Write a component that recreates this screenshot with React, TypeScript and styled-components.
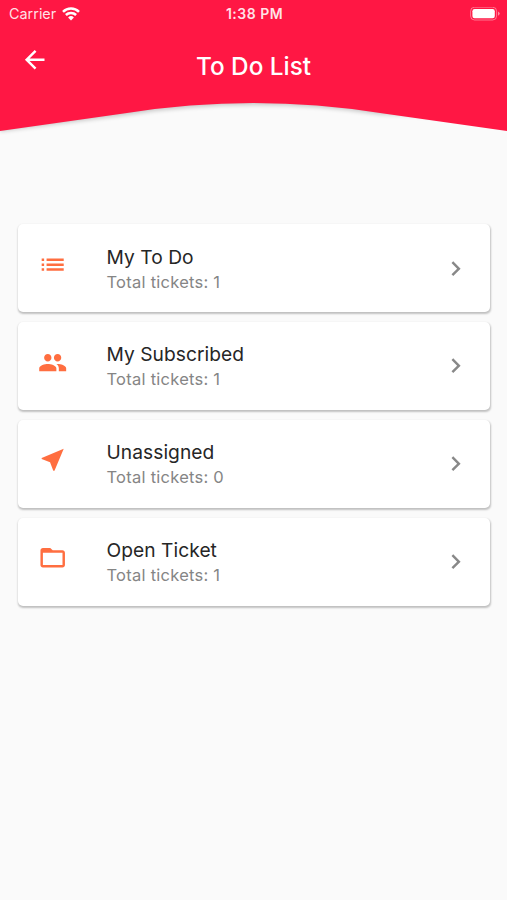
import React from "react";
import styled, { createGlobalStyle } from "styled-components";

const GlobalStyle = createGlobalStyle`
  * { box-sizing: border-box; }
  body {
    margin: 0;
    background: #fafafa;
    font-family: Inter, "Liberation Sans", sans-serif;
  }
`;

const Screen = styled.div`
  min-height: 900px;
  background: #fafafa;
`;

const Header = styled.header`
  position: relative;
  height: 131px;
  color: #fff;
`;

const Wave = styled.svg`
  position: absolute;
  inset: 0;
  width: 100%;
  height: 140px;
  overflow: hidden;
`;

const StatusBar = styled.div`
  position: relative;
  display: grid;
  grid-template-columns: 1fr auto 1fr;
  align-items: center;
  height: 27px;
  padding: 0 7px 0 9px;
`;

const Carrier = styled.div`
  display: flex;
  align-items: center;
  gap: 6px;
  font-size: 14.4px;
  line-height: 18px;
  color: rgba(255, 255, 255, 0.88);
`;

const Clock = styled.div`
  font-size: 14px;
  font-weight: 600;
  line-height: 18px;
  letter-spacing: 0.5px;
  color: rgba(255, 255, 255, 0.88);
`;

const Battery = styled.svg`
  justify-self: end;
  display: block;
`;

const NavBar = styled.div`
  position: relative;
  display: grid;
  grid-template-columns: 50px 1fr 50px;
  height: 66px;
  padding: 0 10px;
`;

const BackButton = styled.button`
  display: flex;
  align-items: center;
  justify-content: center;
  width: 50px;
  height: 66px;
  padding: 0;
  border: 0;
  background: none;
  color: #fff;
`;

const Title = styled.h1`
  margin: 0;
  padding-top: 6px;
  text-align: center;
  font-size: 24.3px;
  font-weight: 500;
  line-height: 66px;
  color: #fff;
`;

const List = styled.ul`
  display: flex;
  flex-direction: column;
  gap: 9.8px;
  margin: 0;
  padding: 93.4px 17px 0 18px;
  list-style: none;
`;

const Card = styled.li`
  display: flex;
  height: 88px;
  padding: 0 20px 0 19.5px;
  border-radius: 5px;
  background: #fff;
  box-shadow: 0.5px 1.5px 2px rgba(0, 0, 0, 0.2), 0 1px 3px rgba(0, 0, 0, 0.07);
`;

const Leading = styled.div`
  width: 69px;
  padding-top: 25.5px;
  color: #ff6e40;
`;

const Content = styled.div`
  flex: 1;
  padding-top: 20.2px;
`;

const Name = styled.div`
  font-size: 19.2px;
  line-height: 25px;
  letter-spacing: 0.05px;
  color: #262626;
`;

const Count = styled.div`
  font-size: 16.5px;
  line-height: 25px;
  letter-spacing: 0.25px;
  color: #858585;
`;

const Trailing = styled.div`
  display: flex;
  align-items: center;
  color: #888;
`;

const Icon = styled.svg`
  display: block;
  width: 29.4px;
  height: 29.4px;
  fill: currentColor;
`;

const tickets = [
  {
    name: "My To Do",
    total: 1,
    path: "M3 13h2v-2H3v2zm0 4h2v-2H3v2zm0-8h2V7H3v2zm4 4h14v-2H7v2zm0 4h14v-2H7v2zM7 7v2h14V7H7z",
  },
  {
    name: "My Subscribed",
    total: 1,
    path: "M16 11c1.66 0 2.99-1.34 2.99-3S17.66 5 16 5c-1.66 0-3 1.34-3 3s1.34 3 3 3zm-8 0c1.66 0 2.99-1.34 2.99-3S9.66 5 8 5C6.34 5 5 6.34 5 8s1.34 3 3 3zm0 2c-2.33 0-7 1.17-7 3.5V19h14v-2.5c0-2.33-4.67-3.5-7-3.5zm8 0c-.29 0-.62.02-.97.05 1.16.84 1.97 1.97 1.97 3.45V19h6v-2.5c0-2.33-4.67-3.5-7-3.5z",
  },
  {
    name: "Unassigned",
    total: 0,
    path: "M21 3L3 10.53v.98l6.84 2.65L12.48 21h.98L21 3z",
  },
  {
    name: "Open Ticket",
    total: 1,
    path: "M20 6h-8l-2-2H4c-1.1 0-1.99.9-1.99 2L2 18c0 1.1.9 2 2 2h16c1.1 0 2-.9 2-2V8c0-1.1-.9-2-2-2zm0 12H4V8h16v10z",
  },
];

export default function App() {
  return (
    <Screen>
      <GlobalStyle />
      <Header>
        <Wave viewBox="0 0 507 140" preserveAspectRatio="none">
          <defs>
            <filter id="waveShadow" x="-5%" y="-5%" width="110%" height="120%">
              <feGaussianBlur stdDeviation="2" />
            </filter>
          </defs>
          <path
            d="M0 0H507V122L400 115L380 114.5Q253 95.5 127 115L0 131.5Z"
            fill="#000"
            opacity="0.2"
            filter="url(#waveShadow)"
          />
          <path d="M0 0H507V131L380 113Q253 93 127 113L0 131Z" fill="#ff1744" />
        </Wave>
        <StatusBar>
          <Carrier>
            Carrier
            <svg width="18" height="14" viewBox="0 0 18 14" fill="none" stroke="#fff" strokeWidth="2.5">
              <path d="M1 4.8a11.3 11.3 0 0 1 16 0" />
              <path d="M3.9 8a7.2 7.2 0 0 1 10.2 0" />
              <path d="M9 13.4L6.1 10.5a4.1 4.1 0 0 1 5.8 0Z" fill="#fff" stroke="none" />
            </svg>
          </Carrier>
          <Clock>1:38 PM</Clock>
          <Battery width="30" height="14" viewBox="0 0 30 14">
            <rect x="0.6" y="0.2" width="26" height="12.8" rx="4" fill="none" stroke="#fff" strokeOpacity="0.4" />
            <rect x="2.4" y="2" width="22.4" height="9.2" rx="2.2" fill="#fff" />
            <path d="M28 4.4q1.7.8 1.7 2.2T28 8.8Z" fill="#fff" fillOpacity="0.5" />
          </Battery>
        </StatusBar>
        <NavBar>
          <BackButton aria-label="Back">
            <Icon viewBox="0 0 24 24">
              <path d="M20 11H7.83l5.59-5.59L12 4l-8 8 8 8 1.41-1.41L7.83 13H20v-2z" />
            </Icon>
          </BackButton>
          <Title>To Do List</Title>
        </NavBar>
      </Header>
      <List>
        {tickets.map((ticket) => (
          <Card key={ticket.name}>
            <Leading>
              <Icon viewBox="0 0 24 24">
                <path d={ticket.path} />
              </Icon>
            </Leading>
            <Content>
              <Name>{ticket.name}</Name>
              <Count>Total tickets: {ticket.total}</Count>
            </Content>
            <Trailing>
              <Icon viewBox="0 0 24 24">
                <path d="M10 6L8.59 7.41 13.17 12l-4.58 4.59L10 18l6-6z" />
              </Icon>
            </Trailing>
          </Card>
        ))}
      </List>
    </Screen>
  );
}
